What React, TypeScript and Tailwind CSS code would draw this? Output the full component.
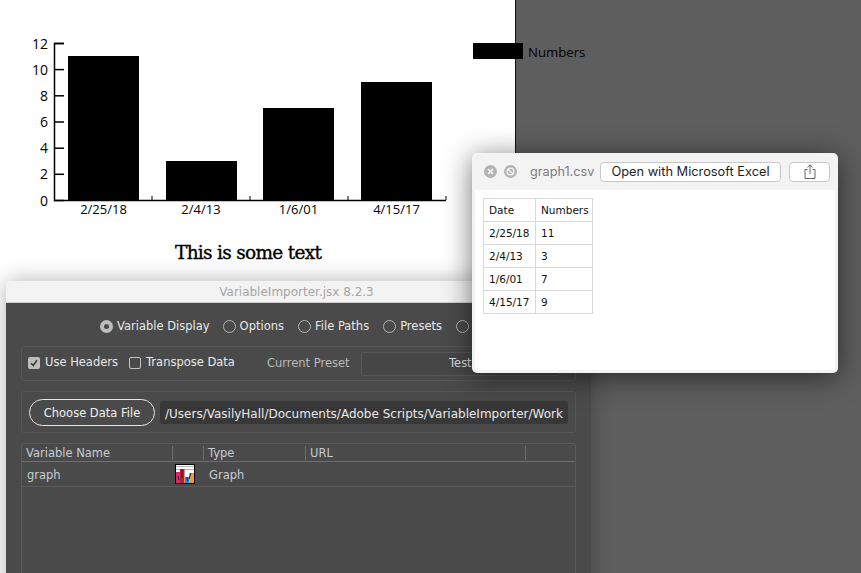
import React from "react";

const ui = { fontFamily: '"DejaVu Sans", sans-serif' };

function Radio({ on, label, className = "" }: { on?: boolean; label: string; className?: string }) {
  return (
    <div className={`flex shrink-0 items-center gap-[4px] ${className}`}>
      {on ? (
        <span className="flex h-[13px] w-[13px] items-center justify-center rounded-full bg-[#bdbdbd]">
          <span className="h-[5px] w-[5px] rounded-full bg-[#4a4a4a]" />
        </span>
      ) : (
        <span className="h-[13px] w-[13px] rounded-full border border-[#b4b4b4]" />
      )}
      <span className="whitespace-nowrap text-[11.5px] text-[#e8e8e8]">{label}</span>
    </div>
  );
}

function Check({ on, label, className = "" }: { on?: boolean; label: string; className?: string }) {
  return (
    <div className={`mb-[2px] flex shrink-0 items-center gap-[5px] ${className}`}>
      {on ? (
        <span className="flex h-[12px] w-[12px] items-center justify-center rounded-[2px] bg-[#bdbdbd]">
          <svg width="10" height="10" viewBox="0 0 10 10" fill="none" stroke="#3f3f3f" strokeWidth="1.6">
            <path d="M2 5.2 L4.2 7.5 L8 2.2" />
          </svg>
        </span>
      ) : (
        <span className="h-[12px] w-[12px] rounded-[2px] border border-[#c4c4c4]" />
      )}
      <span className="whitespace-nowrap text-[11.5px] text-[#e8e8e8]">{label}</span>
    </div>
  );
}

function Chart() {
  const ticks = [
    [12, 43.5],
    [10, 69.6],
    [8, 95.8],
    [6, 122],
    [4, 148.2],
    [2, 174.3],
    [0, 200.5],
  ];
  const bars = [
    [68, 56, "2/25/18", 103.5],
    [166, 161, "2/4/13", 201],
    [263, 108, "1/6/01", 298.5],
    [361, 82, "4/15/17", 396.5],
  ] as const;
  return (
    <svg width="600" height="280" className="absolute left-0 top-0" style={{ fontFamily: '"Open Sans", sans-serif' }}>
      <path d="M64 43.5 H54.5 V200.5 H446" fill="none" stroke="#000" strokeWidth="1.5" />
      {ticks.map(([v, y]) => (
        <g key={v}>
          <line x1="54" x2="64" y1={y} y2={y} stroke="#000" strokeWidth="1.5" />
          <text x="48" y={y + 5} textAnchor="end" fontSize="14" fill="#000">
            {v}
          </text>
        </g>
      ))}
      {[152, 250, 348, 446].map((x) => (
        <line key={x} x1={x} x2={x} y1="196" y2="200" stroke="#000" />
      ))}
      {bars.map(([x, y, label, cx]) => (
        <g key={label}>
          <rect x={x} y={y} width="71" height={200 - y} fill="#000" />
          <text x={cx} y="214" textAnchor="middle" fontSize="13" fill="#000">
            {label}
          </text>
        </g>
      ))}
      <text x="175" y="259" fontSize="18.5" fill="#000" stroke="#000" strokeWidth="0.35" style={{ fontFamily: '"DejaVu Serif", serif', letterSpacing: "-0.7px" }}>
        This is some text
      </text>
      <rect x="473" y="43" width="50" height="16" fill="#000" />
      <text x="528" y="57" fontSize="13.2" fill="#000">
        Numbers
      </text>
    </svg>
  );
}

function Thumb() {
  return (
    <svg width="20" height="20" viewBox="0 0 20 20" className="block">
      <rect x="0.5" y="0.5" width="19" height="19" fill="#fff" stroke="#000" />
      <path d="M1 2.5h18M1 5.5h18" stroke="#b5b5b5" />
      <path d="M1 8h4v11H1z" fill="#e8206f" />
      <path d="M5 5h4.5v14H5z" fill="#b5202c" />
      <path d="M10 13h4v6h-4z" fill="#1f8fd0" />
      <path d="M14 9h5v10h-5z" fill="#f59a2c" />
      <path d="M3 12l1 4M7 5v9M12 13l0.5 4M16 9l-2 6" stroke="#222" />
    </svg>
  );
}

function Dialog() {
  return (
    <div className="absolute left-[6px] top-[281px] h-[320px] w-[585px] overflow-hidden rounded-t-[5px] shadow-[0_0_22px_rgba(0,0,0,0.3)]" style={ui}>
      <div className="flex h-[22px] items-center justify-center border-b border-[#d0d0d0] bg-[#f3f3f3] pr-[4px] text-[12px] text-[#a6a6a6]">
        VariableImporter.jsx 8.2.3
      </div>
      <div className="h-full bg-[#4a4a4a] px-[15px]">
        <div className="flex h-[43px] items-center pl-[79px] pt-[4px]">
          <Radio on label="Variable Display" className="mr-[13px]" />
          <Radio label="Options" className="mr-[14px]" />
          <Radio label="File Paths" className="mr-[14px]" />
          <Radio label="Presets" className="mr-[14px]" />
          <Radio label="Text" />
        </div>
        <div className="flex h-[35px] items-center rounded-[3px] border border-[#565656] pl-[6px] pr-[15px]">
          <Check on label="Use Headers" />
          <Check label="Transpose Data" className="ml-[11px]" />
          <span className="ml-[32px] mr-[11px] whitespace-nowrap text-[11.5px] text-[#b9b9b9]">Current Preset</span>
          <div className="flex h-[24px] flex-1 items-center justify-center rounded-[3px] border border-[#595959] bg-[#464646] text-[11.5px] text-[#dcdcdc]">
            Test
          </div>
        </div>
        <div className="mt-[10px] flex h-[42px] items-center gap-[5px] rounded-[3px] border border-[#565656] pl-[7px] pr-[7px] pt-[1px]">
          <div className="flex h-[27px] w-[126px] shrink-0 items-center justify-center rounded-full border border-[#e8e8e8] pt-[2px] text-[11.5px] text-[#f0f0f0]">
            Choose Data File
          </div>
          <div className="flex h-[23px] min-w-0 flex-1 items-center overflow-hidden rounded-[3px] bg-[#383838] pl-[5px] pt-[2px] text-[12px] whitespace-nowrap text-[#e8e8e8]">
            /Users/VasilyHall/Documents/Adobe Scripts/VariableImporter/Work
          </div>
        </div>
        <div className="mt-[10px] h-[200px] rounded-[3px] border border-[#5a5a5a] text-[11.5px]">
          <div className="flex h-[18px] items-center border-b border-[#6e6e6e] text-[#c6ccd2]">
            <div className="w-[150px] pl-[4px] pt-[2px]">Variable Name</div>
            <div className="h-[14px] w-[31px] border-l border-[#6a6a6a]" />
            <div className="flex h-[14px] w-[102px] items-center border-l border-[#6a6a6a] pl-[4px] pt-[2px]">Type</div>
            <div className="flex h-[14px] w-[220px] items-center border-l border-[#6a6a6a] pl-[4px] pt-[2px]">URL</div>
            <div className="h-[14px] border-l border-[#6a6a6a]" />
          </div>
          <div className="flex h-[25px] items-center border-b border-[#5a5a5a] text-[#c6ccd2]">
            <div className="w-[153px] pl-[5px] pt-[3px]">graph</div>
            <div className="w-[34px]">
              <Thumb />
            </div>
            <div className="pt-[3px]">Graph</div>
          </div>
        </div>
      </div>
    </div>
  );
}

function CsvWindow() {
  const rows = [
    ["Date", "Numbers"],
    ["2/25/18", "11"],
    ["2/4/13", "3"],
    ["1/6/01", "7"],
    ["4/15/17", "9"],
  ];
  return (
    <div className="absolute left-[472px] top-[153px] flex h-[220px] w-[366px] flex-col rounded-[5px] bg-[#f3f3f3] px-[3px] pb-[3px] shadow-[0_4px_28px_rgba(0,0,0,0.55)]">
      <div className="flex h-[37px] shrink-0 items-center pl-[9px]" style={{ fontFamily: "Inter, sans-serif" }}>
        <svg width="13" height="13" viewBox="0 0 13 13" className="shrink-0">
          <circle cx="6.5" cy="6.5" r="6.5" fill="#b3b3b3" />
          <path d="M4 4l5 5M9 4l-5 5" stroke="#f3f3f3" strokeWidth="1.7" />
        </svg>
        <svg width="13" height="13" viewBox="0 0 13 13" className="ml-[7px] shrink-0">
          <circle cx="6.5" cy="6.5" r="6.5" fill="#b3b3b3" />
          <circle cx="6.5" cy="6.5" r="3.4" fill="none" stroke="#f3f3f3" strokeWidth="1.4" />
          <path d="M4 4l5 5" stroke="#f3f3f3" strokeWidth="1.4" />
        </svg>
        <span className="ml-[13px] w-[67px] shrink-0 whitespace-nowrap pt-[1px] text-[12.7px] text-[#7c7c7c]">graph1.csv</span>
        <div className="ml-[3px] flex h-[20px] w-[181px] shrink-0 items-center justify-center rounded-[4px] border border-[#c8c8c8] bg-white pt-[1px] text-[12.8px] text-[#1e1e1e]">
          Open with Microsoft Excel
        </div>
        <div className="ml-[8px] flex h-[20px] w-[41px] shrink-0 items-center justify-center rounded-[4px] border border-[#c8c8c8] bg-white">
          <svg width="12" height="15" viewBox="0 0 12 15" fill="none" stroke="#666" strokeWidth="1">
            <path d="M3.5 5.5H1v9h10v-9H8.5M6 10V1M3.5 3.2L6 .8l2.5 2.4" />
          </svg>
        </div>
      </div>
      <div className="flex-1 bg-white pl-[8px] pt-[8px]">
        <table className="border-collapse text-[10.5px] text-[#111]" style={ui}>
          <tbody>
            {rows.map(([a, b]) => (
              <tr key={a} className="h-[23px]">
                <td className="w-[52px] border border-[#d8d8d8] pl-[5px] pt-[2px]">{a}</td>
                <td className="w-[57px] border border-[#d8d8d8] pl-[5px] pt-[2px]">{b}</td>
              </tr>
            ))}
          </tbody>
        </table>
      </div>
    </div>
  );
}

export default function App() {
  return (
    <div className="relative h-[573px] w-[861px] overflow-hidden bg-[#5e5e5e]">
      <div className="absolute inset-y-0 left-0 w-[516px] border-r border-[#111] bg-white" />
      <Chart />
      <Dialog />
      <CsvWindow />
    </div>
  );
}
